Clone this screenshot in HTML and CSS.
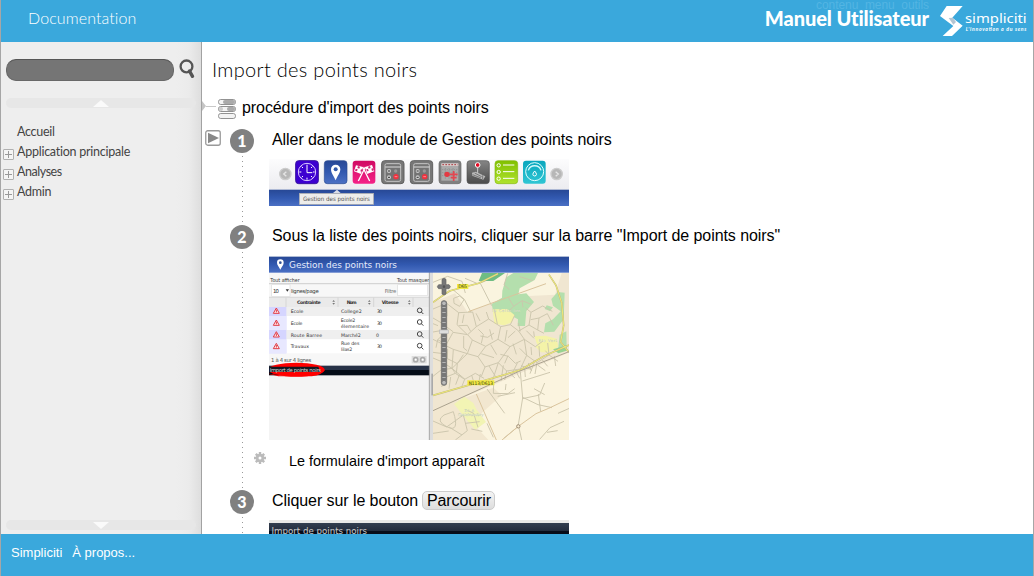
FILE: index.html
```html
<!DOCTYPE html>
<html lang="fr">
<head>
<meta charset="utf-8">
<title>Import des points noirs</title>
<link rel="stylesheet" href="styles.css">
</head>
<body>
<header class="header">
  <div class="doc-title">Documentation</div>
  <div class="skip">contenu&nbsp; menu&nbsp; outils</div>
  <div class="manual">Manuel Utilisateur</div>
  <svg class="logo" viewBox="600 12 264 102" width="88" height="34">
    <path d="M620 18H668L637 53 668 77 636 108H608L640 78 600 48Z" fill="#fff"/>
    <path d="M626 54L638 53 648 66 640 74Z" fill="#b4c5d2"/>
    <text x="675" y="70" font-family="Noto Sans" font-size="40" textLength="185" lengthAdjust="spacingAndGlyphs" fill="#fff">simpliciti</text>
    <text x="677" y="92" font-family="Lato" font-style="italic" font-weight="bold" font-size="15" textLength="182" fill="#fff">L'innovation a du sens</text>
  </svg>
</header>
<main class="main">
  <aside class="sidebar">
    <div class="search">
      <div class="search-box"></div>
      <svg width="17" height="20" viewBox="0 0 17 20"><circle cx="7.500" cy="7.400" r="5.900" fill="none" stroke="#555" stroke-width="2.300"/><path d="M10.500 12L13.500 17.300" stroke="#555" stroke-width="3.400" stroke-linecap="round"/></svg>
    </div>
    <div class="scroll-bar"><svg width="16" height="7"><path d="M0 7L8 0 16 7Z" fill="#fafafa"/></svg></div>
    <nav class="nav">
      <div class="nav-item"><i class="blank"></i><span class="n1">Accueil</span></div>
      <div class="nav-item"><i class="plus"></i><span class="n2">Application principale</span></div>
      <div class="nav-item"><i class="plus"></i><span class="n3">Analyses</span></div>
      <div class="nav-item"><i class="plus"></i><span class="n4">Admin</span></div>
    </nav>
    <div class="scroll-bar bottom"><svg width="16" height="7"><path d="M0 0L8 7 16 0Z" fill="#fafafa"/></svg></div>
  </aside>
  <article class="content">
    <h1 class="title">Import des points noirs</h1>
    <div class="proc">
      <svg width="35" height="22" viewBox="0 0 35 22">
        <path d="M0 4L4 9 0 14Z" fill="#c4c4c4"/><path d="M4 9.500H14" stroke="#c8c8c8"/>
        <g fill="#f3f3f3" stroke="#929292"><rect x="16.500" y="2.500" width="17" height="5" rx="2.200"/><rect x="16.500" y="9.500" width="17" height="5" rx="2.200"/><rect x="16.500" y="16.500" width="17" height="5" rx="2.200"/></g>
        <rect x="21" y="3" width="12" height="4" rx="2" fill="#aaa"/><rect x="25" y="10" width="8" height="4" rx="2" fill="#aaa"/><rect x="17" y="10" width="4" height="4" rx="2" fill="#ccc"/>
      </svg>
      <span class="proc-name">procédure d'import des points noirs</span>
    </div>
    <ol class="steps">
      <li class="step s1">
        <svg class="play" width="16" height="16"><rect x=".75" y=".75" width="14.500" height="14.500" rx="2" fill="#fff" stroke="#999" stroke-width="1.300"/><path d="M3 2.800L14 8 3 13.200Z" fill="#888"/></svg>
        <b class="num">1</b>
        <div class="body">
          <p class="cmd">Aller dans le module de Gestion des points noirs</p>
          <svg class="shot" width="300" height="47" viewBox="12 12 900 141">
            <defs>
              <linearGradient id="tb" x2="0" y2="1"><stop stop-color="#fcfcfd"/><stop offset="1" stop-color="#ececf0"/></linearGradient>
              <linearGradient id="bl" x2="0" y2="1"><stop stop-color="#274895"/><stop offset=".5" stop-color="#3259b0"/><stop offset="1" stop-color="#4b70c4"/></linearGradient>
              <linearGradient id="dk" x2="0" y2="1"><stop stop-color="#858585"/><stop offset="1" stop-color="#4b4b4b"/></linearGradient>
              <linearGradient id="pk" x2="0" y2="1"><stop stop-color="#d00963"/><stop offset="1" stop-color="#f42287"/></linearGradient>
              <linearGradient id="gn" x2="0" y2="1"><stop stop-color="#80c000"/><stop offset="1" stop-color="#afe22d"/></linearGradient>
              <linearGradient id="cy" x2="0" y2="1"><stop stop-color="#08a6bd"/><stop offset="1" stop-color="#30c6d4"/></linearGradient>
              <g id="calc"><rect x="350" y="17" width="67" height="69" rx="9" fill="#777" stroke="#606060" stroke-width="3"/><rect x="360" y="26" width="47" height="53" rx="5" fill="#737373" stroke="#c5c5c5" stroke-width="3"/><path d="M361 36H407" stroke="#ddd" stroke-width="3"/><g fill="#ccc"><circle cx="372" cy="48" r="6"/><circle cx="392" cy="48" r="5" fill="#999"/><circle cx="372" cy="67" r="6"/></g><path d="M369 48H375M369 67H375" stroke="#333" stroke-width="3"/><circle cx="393" cy="65" r="8" fill="#ef3340"/><path d="M389 65H397" stroke="#fbb" stroke-width="2"/></g>
            </defs>
            <rect x="12" y="12" width="900" height="92" fill="url(#tb)"/>
            <rect x="12" y="104" width="900" height="49" fill="url(#bl)"/>
            <g fill="#b7b7b7" stroke="#ccc" stroke-width="4"><circle cx="61" cy="57" r="17"/><circle cx="875" cy="57" r="17"/></g>
            <path d="M64 50L56 57 64 64M872 50L880 57 872 64" fill="none" stroke="#e5e5e5" stroke-width="4"/>
            <rect x="92" y="17" width="68" height="69" rx="9" fill="#3d00d1" stroke="#3915a0" stroke-width="3"/>
            <circle cx="126" cy="51" r="26" fill="none" stroke="#dcccff" stroke-width="3"/><path d="M126 29V53H142M126 68V74M103 51H109M144 51H149M110 35L114 39M142 35L138 39M110 67L114 63M142 67L138 63" fill="none" stroke="#fff" stroke-width="3"/>
            <rect x="178" y="17" width="68" height="69" rx="9" fill="url(#bl)" stroke="#274a90" stroke-width="2"/>
            <path d="M212 76C206 63 198 54 198 43A14 14 0 0 1 226 43C226 54 217 63 212 76Z" fill="#fff"/><circle cx="212" cy="43" r="6" fill="#3259aa"/>
            <rect x="263" y="17" width="68" height="69" rx="9" fill="url(#pk)"/>
            <path d="M273 31L294 36 288 57 267 49ZM321 30L300 36 306 57 328 49Z" fill="#fff"/><path d="M293 36L314 78M301 36L280 78" stroke="#fff" stroke-width="4"/><path d="M279 33l6 2-2 6-6-2zM288 43l5 1-2 6-5-1zM272 41l6 2-2 6-6-2zM315 33l-6 2 2 6 6-2zM304 43l5-1 2 6-5 1zM319 41l6-2 2 7-6 2z" fill="#cf2471"/>
            <use href="#calc"/><use href="#calc" x="86"/>
            <rect x="522" y="17" width="66" height="69" rx="9" fill="#808080" stroke="#666" stroke-width="2"/><rect x="529" y="25" width="51" height="52" fill="#aaa"/><path d="M529 29H580" stroke="#d8caca" stroke-width="8"/><path d="M532 29H578" stroke="#a83a3e" stroke-width="3" stroke-dasharray="5 4"/><path d="M531 44H578M531 53H578M531 62H578M541 39V73M552 39V73M564 39V73" stroke="#888" stroke-width="2" stroke-dasharray="4 3"/><circle cx="546" cy="58" r="8" fill="#e43943"/><path d="M566 48V78M552 58H578M557 68H575" stroke="#e34750" stroke-width="5"/>
            <rect x="606" y="17" width="67" height="69" rx="9" fill="url(#dk)" stroke="#555" stroke-width="2"/><path d="M638 37V54" stroke="#fff" stroke-width="2"/><circle cx="638" cy="30" r="7" fill="#e60a24" stroke="#fff" stroke-width="3"/><path d="M621 53L632 50 661 64 655 74 622 62Z" fill="#bbb"/><path d="M623 59L648 69M629 54L650 65M653 61V72" stroke="#777" stroke-width="3"/>
            <rect x="690" y="17" width="68" height="69" rx="9" fill="url(#gn)" stroke="#85b914" stroke-width="2"/><path d="M714 30H748M714 50H748M714 70H748" stroke="#fff" stroke-width="3"/><g fill="none" stroke="#fff" stroke-width="3"><circle cx="701" cy="31" r="5"/><circle cx="701" cy="51" r="5"/><circle cx="701" cy="71" r="5"/></g>
            <rect x="774" y="17" width="68" height="69" rx="9" fill="url(#cy)"/><circle cx="809" cy="50" r="27" fill="none" stroke="#e2ffff" stroke-width="3"/><path d="M790 46A20 20 0 0 1 828 46" fill="none" stroke="#d4f8fb" stroke-width="4"/><path d="M809 48Q798 61 809 63 820 61 809 48Z" fill="none" stroke="#fff" stroke-width="3"/>
            <path d="M204 114L216 104 227 114Z" fill="#dadee8"/>
            <rect x="103" y="115" width="223" height="33" fill="#ededeb" stroke="#aaa" stroke-width="2"/>
            <text x="114" y="138" class="ui" font-size="18" textLength="201" lengthAdjust="spacingAndGlyphs" fill="#555">Gestion des points noirs</text>
          </svg>
        </div>
      </li>
      <li class="step s2">
        <b class="num">2</b>
        <div class="body">
          <p class="cmd">Sous la liste des points noirs, cliquer sur la barre "Import de points noirs"</p>
          <svg class="shot" width="300" height="184" viewBox="12 12 900 552">
            <rect x="12" y="12" width="900" height="552" fill="#f7f7f7"/>
            <rect x="12" y="372" width="480" height="192" fill="#f4f4f4"/>
            <g class="ui" font-size="16" fill="#333">
              <text x="16" y="91" textLength="88" lengthAdjust="spacingAndGlyphs">Tout afficher</text><text x="396" y="91" textLength="97" lengthAdjust="spacingAndGlyphs">Tout masquer</text>
              <path d="M12 95H493M12 136H493" stroke="#bbb" stroke-width="2"/>
              <rect x="20" y="98" width="55" height="35" fill="#fff" stroke="#ddd" stroke-width="2"/><rect x="398" y="98" width="89" height="33" fill="#fff" stroke="#ddd" stroke-width="2"/>
              <text x="24" y="122" textLength="18">10</text><path d="M62 112H72L67 119Z"/><text x="78" y="122" textLength="83">lignes/page</text><text x="359" y="122" textLength="35" fill="#777">Filtre</text>
              <rect x="12" y="137" width="481" height="28" fill="#eaeaea"/><path d="M63 137V165M219 137V165M326 137V165M444 137V165" stroke="#ccc" stroke-width="2"/>
              <g font-weight="bold" font-size="14"><text x="96" y="156" textLength="71">Contrainte</text><text x="245" y="156" textLength="30">Nom</text><text x="350" y="156" textLength="51">Vitesse</text></g>
              <path d="M202 149l4-5 4 5zM202 153l4 5 4-5zM309 149l4-5 4 5zM309 153l4 5 4-5zM429 149l4-5 4 5zM429 153l4 5 4-5z" fill="#777"/>
              <rect x="12" y="165" width="481" height="27" fill="#efefef"/><rect x="12" y="192" width="481" height="42" fill="#fff"/><rect x="12" y="234" width="481" height="28" fill="#efefef"/><rect x="12" y="262" width="481" height="42" fill="#fff"/><path d="M12 165H64V304H12Z" fill="#d5d5ff"/><path d="M12 192H64V234H12ZM12 262H64V304H12Z" fill="#e8e8ff"/>
              <g fill="#fff2f2" stroke="#e13b46" stroke-width="3" stroke-linejoin="round"><path id="warn" d="M34 168L43 184H25Z"/><use href="#warn" y="36"/><use href="#warn" y="71"/><use href="#warn" y="106"/><path d="M34 173V181M34 209V217M34 244V252M34 279V287"/></g>
              <g font-size="14"><text x="77" y="183" textLength="38">Ecole</text><text x="228" y="183" textLength="62">College2</text><text x="336" y="183" textLength="15">30</text><text x="77" y="219" textLength="35">Ecole</text><text x="227" y="209" textLength="44">Ecole2</text><text x="228" y="227" textLength="84">élementaire</text><text x="336" y="219" textLength="15">30</text><text x="77" y="254" textLength="94">Route Barree</text><text x="228" y="254" textLength="59">Marché2</text><text x="333" y="254">0</text><text x="77" y="289" textLength="55">Travaux</text><text x="228" y="280" textLength="55">Rue des</text><text x="228" y="298" textLength="34">lilas2</text><text x="336" y="289" textLength="15">30</text></g>
              <g fill="none" stroke="#444" stroke-width="3"><g id="glass"><circle cx="464" cy="175" r="7"/><path d="M469 180L475 186"/></g><use href="#glass" y="35"/><use href="#glass" y="71"/><use href="#glass" y="106"/></g>
              <text x="18" y="330" textLength="121" fill="#555">1 à 4 sur 4 lignes</text>
              <rect x="440" y="312" width="45" height="22" fill="#ddd"/><g fill="#fff" stroke="#aaa" stroke-width="5"><circle cx="452" cy="323" r="6"/><circle cx="473" cy="323" r="6"/></g>
            </g>
            <rect x="12" y="341" width="487" height="15" fill="#273247"/><rect x="12" y="354" width="487" height="16" fill="#050d17"/>
            <ellipse cx="94" cy="353" rx="85" ry="21" fill="#f00"/><path d="M12 341V365Q100 380 171 355L180 353Q172 369 140 373H40L12 366Z" fill="#f00"/><path d="M12 344H160L166 360H12Z" fill="#141821"/><text x="14" y="359" class="ui" font-size="16" textLength="154" fill="#ddd">Import de points noirs</text>
            <path d="M493 60H504V564H493Z" fill="#ddd"/><path d="M493 60V564" stroke="#888" stroke-width="2"/><rect x="499" y="365" width="7" height="65" fill="#aaa"/>
            <svg x="504" y="63" width="408" height="501" viewBox="24 63 408 501">
              <rect x="24" y="63" width="408" height="501" fill="#f0e6d1"/>
              <path d="M24 63H410L390 128 248 135 128 181 90 124 24 151Z" fill="#faf4df"/>
              <path d="M24 476L433 301V564H24Z" fill="#fbf4df"/>
              <path d="M24 470L205 407 230 430 140 510 190 564H24Z" fill="#f2e7d0"/>
              <path d="M171 63H240L205 87 161 87Z" fill="#6fbd83"/>
              <path d="M244 76L265 63H339L329 84 284 109 280 127 304 124 327 150 304 177 300 222 278 222 279 202 241 182 203 171 200 156 231 137 232 116ZM398 120L419 122 416 202 388 239 357 241 361 214 384 202 407 178 384 161 379 141ZM365 160L384 166 375 177 359 171ZM404 248L424 238 425 282 399 294Z" fill="#b4dfad"/>
              <path d="M203 172L247 171 269 190 261 211 238 220 208 215ZM328 253L361 251 395 260 400 284 366 302 343 297ZM330 283L360 279 367 299 348 301Z" fill="#f4f3a8"/>
              <path d="M87 456L118 434 145 453 154 472 183 510 151 533 128 507Z" fill="#f2f4b4"/>
              <path d="M384 292L425 280V296L400 304Z" fill="#98d491"/>
              <g fill="none" stroke="#cbc5ac" stroke-width="2.800">
                <path d="M24 91L68 73 111 88 121 123M62 126L84 113 118 142 138 181M87 154L104 163 117 143 104 132 86 139ZM24 171L65 154 101 182 143 180 154 224 128 248 84 241 62 281 24 262M65 154L66 192 48 212 24 198M48 212L84 239M101 182L96 218 126 247M154 224L191 201 227 224 256 218 269 190M191 201L184 180M227 224L219 262 182 283 142 264 128 248M142 264L127 305 85 292 62 281 50 329 81 349 127 305M85 292L81 349M50 329L24 318M81 349L120 382M127 305L159 314 182 283M219 262L255 284 298 262 331 284 354 267M159 314L180 345 220 332 255 284M220 332L245 357 286 351 305 310 298 262M180 345L169 373M245 357L239 384M305 310L336 332 372 309 368 273M305 310L284 289M372 309L399 328M336 332L330 366M256 218L281 237 298 262M281 237L312 219 338 234 357 244M312 219L318 181 353 162 382 178M318 181L302 168M338 234L342 198 367 185M342 198L317 203M367 185L385 220M372 309L361 296M24 373L48 354 81 349M50 405L61 376 91 364 119 382 111 402M91 364L81 349M119 382L151 364 177 379M203 384L220 332M260 368L277 333M120 79L158 95 182 87M200 161L166 94M248 64L237 99 253 112M284 74L323 86M250 137L266 163 291 146 319 157M266 163L251 178M291 146L294 166"/>
                <path d="M24 215L39 221M24 240L69 232M33 287L38 263 58 245M38 263L65 278M24 301L54 305M67 320L97 335 94 364M67 320L68 291M97 335L115 308M116 252L116 288 126 296M137 238L127 220 101 221M117 187L112 213M160 232L175 247 169 274M165 207L153 184M208 172L217 216M194 232L202 263M166 252L188 256M188 256L207 243M169 305L207 317M197 278L215 308M240 269L246 234M226 307L250 313 271 334 287 327M239 334L249 311M264 275L274 307M271 237L249 257M286 238L280 213M304 236L327 259M326 238L328 255M318 285L320 309M342 282L344 314M288 341L318 352M310 333L320 357M339 340L361 356M352 324L368 343M388 312L392 342M77 375L72 410M103 369L92 398M140 370L149 398M166 366L161 395M192 342L211 373M235 340L228 387M250 360L270 378M272 356L284 379M299 349L301 375M315 365L327 333"/>
                <path d="M186 411L239 484M206 395L205 424 249 425 269 410M218 433L270 422M241 414L243 396M286 359L293 438 280 518 290 564M292 387L375 361M292 440L344 429 359 393M340 426L347 479M327 410L359 428M291 435L339 458 381 467M280 523L236 559M344 562L375 527 417 508M366 541L398 536M399 484L433 469M24 507L65 525 115 489 127 536 91 564M57 489Q29 507 67 525T85 479ZM72 525L111 549M121 514L164 509M24 544L71 537M127 475L146 484 159 526M186 514L205 556M139 531L172 538"/>
              </g>
              <g fill="none" stroke="#c0b582" stroke-width="5"><path d="M24 151L73 117 161 94 219 65M372 68L393 100 410 152 416 220 407 270 432 301M24 430L139 397 286 354 356 313 432 279"/></g><g fill="none" stroke="#edea75" stroke-width="3"><path d="M24 151L73 117 161 94 219 65M372 68L393 100 410 152 416 220 407 270 432 301M24 430L139 397 286 354 356 313 432 279"/></g>
              <path d="M24 476L280 359 432 299" fill="none" stroke="#aaa28f" stroke-width="3"/><path d="M130 179L237 140 363 95M154 426L214 564M231 564L280 523 333 485 371 469 432 440" fill="none" stroke="#dac49d" stroke-width="3"/>
              <circle cx="280" cy="523" r="5" fill="#f9edd2" stroke="#9f8d75" stroke-width="3"/>
              <path d="M96 96H130V111H96ZM127 385H208V400H127Z" fill="#f2e943"/><g class="ui" font-size="14" fill="#3d4518"><text x="100" y="109" textLength="26">D65</text><text x="131" y="398" textLength="73" lengthAdjust="spacingAndGlyphs">N113/D613</text></g>
              <g class="ui" font-size="11" fill="#fff" stroke="#b5c29d" stroke-width=".6"><text x="202" y="180" textLength="83">la Celle-les</text><text x="341" y="269" textLength="55">Rio Vert</text><text x="118" y="481">Z.I. A</text><text x="99" y="493" textLength="76">Castelnaudary</text></g>
              <g fill="#777" stroke="#666" stroke-width="2"><path d="M51 82Q57 76 63 82V98H72Q80 104 72 110H63V126Q57 132 51 126V110H41Q33 104 41 98H51Z"/><rect x="49" y="146" width="16" height="254" rx="7"/></g><path d="M57 165V389" stroke="#b5b5b5" stroke-width="10" stroke-dasharray="3 12"/><rect x="43" y="234" width="27" height="10" fill="#ddd" stroke="#bbb" stroke-width="2"/><circle cx="57" cy="154" r="7" fill="#bbb" stroke="#777" stroke-width="3"/><circle cx="57" cy="392" r="7" fill="#bbb" stroke="#777" stroke-width="3"/><circle cx="57" cy="104" r="4" fill="#555"/>
            </svg>
            <rect x="12" y="14" width="900" height="48" fill="url(#bl)"/><path d="M12 13H912" stroke="#aab9d8" stroke-width="2"/>
            <path d="M46 53C42 44 36 39 36 32A10 10 0 0 1 56 32C56 39 50 44 46 53Z" fill="#fff"/><circle cx="46" cy="32" r="4" fill="#315196"/><text x="72" y="48" class="ui" font-size="27" textLength="324" lengthAdjust="spacingAndGlyphs" fill="#e7edfc">Gestion des points noirs</text>
          </svg>
          <div class="result"><svg width="12" height="12" viewBox="-6 -6 12 12"><g stroke="#bbb" stroke-width="2.400"><path d="M0-6V6M-6 0H6M-4.200-4.200L4.200 4.200M4.200-4.200L-4.200 4.200"/></g><circle r="4.200" fill="#bbb"/><circle r="1.500" fill="#fff"/></svg><span class="result-text">Le formulaire d'import apparaît</span></div>
        </div>
      </li>
      <li class="step s3">
        <b class="num">3</b>
        <div class="body">
          <p class="cmd">Cliquer sur le bouton <kbd>Parcourir</kbd></p>
          <svg class="shot" width="300" height="30" viewBox="0 0 300 30"><defs><linearGradient id="nv" x2="0" y2="1"><stop stop-color="#333f50"/><stop offset="1" stop-color="#222c3d"/></linearGradient></defs><rect width="300" height="30" fill="#070c19"/><rect width="300" height="3" fill="#e9e9e7"/><rect y="3" width="300" height="8" fill="url(#nv)"/><text x="2.500" y="14" class="ui" font-size="9" textLength="95.500" lengthAdjust="spacingAndGlyphs" fill="#ccc">Import de points noirs</text></svg>
        </div>
      </li>
    </ol>
  </article>
</main>
<footer class="footer"><span class="f1">Simpliciti</span><span class="f2">À propos...</span></footer>
</body>
</html>
```
FILE: styles.css
```css
* { box-sizing: border-box; }
body { margin: 0; width: 1034px; height: 576px; overflow: hidden; display: flex; flex-direction: column; border-left: 1px solid #a6a6a6; border-right: 1px solid #a6a6a6; background: #fff; font-family: "Liberation Sans", Arial, sans-serif; color: #000; }
.header { position: relative; height: 42px; flex: none; display: flex; align-items: flex-start; background: #3aa8dc; color: #fff; padding: 0 5px 0 27px; }
.doc-title { font: 300 16px/20px Lato, sans-serif; letter-spacing: .1px; margin-top: 8px; white-space: nowrap; }
.skip { position: absolute; right: 104px; top: -2px; font-size: 12px; line-height: 14px; color: #53b5e3; letter-spacing: -.05px; white-space: nowrap; }
.manual { position: relative; margin-left: auto; margin-top: 6px; font: 900 20px/24px Lato, sans-serif; letter-spacing: -.1px; white-space: nowrap; }
.logo { flex: none; margin: 4px 0 0 11px; }
.main { flex: 1; min-height: 0; display: flex; }
.sidebar { width: 201px; flex: none; display: flex; flex-direction: column; border-right: 1px solid #a2a2a2; background: linear-gradient(to right, #eee 175px, #ebebeb 188px, #dedede 200px); padding: 17px 5px 3px 5px; }
.search { display: flex; gap: 5px; height: 39px; }
.search-box { width: 168px; flex: none; height: 22px; border-radius: 10px; background: #757575; border: 1px solid #686868; border-top-color: #555; }
.scroll-bar { height: 10px; border-radius: 5px; background: #e7e7e7; display: flex; justify-content: center; align-items: center; flex: none; }
.bottom { margin-top: auto; margin-bottom: 1px; }
.nav { margin-top: 14px; }
.nav-item { height: 20px; display: flex; gap: 3px; margin-left: -3px; align-items: center; font: 12.5px/20px Lato, sans-serif; color: #444; white-space: nowrap; }
.plus, .blank { width: 11px; height: 11px; flex: none; margin-top: 4px; }
.plus { border: 1px solid #b0b0b0; border-radius: 1px; background: linear-gradient(#999, #999) center / 7px 1px no-repeat, linear-gradient(#999, #999) center / 1px 7px no-repeat, #f5f5f5; }
.n1 { letter-spacing: -.3px; }
.n2 { letter-spacing: -.25px; }
.n3 { letter-spacing: -.45px; }
.n4 { letter-spacing: -.3px; }
.content { flex: 1; min-width: 0; overflow: hidden; }
.title { margin: 14px 0 0 10px; height: 41px; font: 300 20px/26px Lato, sans-serif; letter-spacing: .3px; white-space: nowrap; }
.proc { display: flex; height: 32px; gap: 5px; }
.proc-name { font-size: 16px; line-height: 22px; letter-spacing: -.08px; white-space: nowrap; }
.steps { margin: 0; padding: 0 0 0 3px; list-style: none; }
.step { display: flex; align-items: flex-start; background: radial-gradient(circle, #999 .7px, transparent 1px) 35px 0 / 5px 5px repeat-y; }
.s1 { height: 96px; }
.s2 { height: 265px; }
.s3 { height: 80px; }
.play { flex: none; margin-top: 1px; }
.s2, .s3 { padding-left: 16px; }
.num { width: 24px; height: 24px; flex: none; margin-left: 9px; border-radius: 50%; background: #808080; color: #fff; font: 900 16px/24px Lato, sans-serif; text-align: center; }
.body { padding-left: 15px; }
.cmd { margin: 0; padding-left: 3px; height: 31px; font-size: 16px; line-height: 21px; letter-spacing: -.075px; white-space: nowrap; }
.s1 .cmd, .s3 .cmd { height: 30px; }
.shot { display: block; }
.ui { font-family: "DejaVu Sans", sans-serif; }
.result { margin-left: -15px; margin-top: 10px; display: flex; gap: 23px; align-items: center; height: 22px; }
.result svg { margin-top: -6px; }
.result-text { font-size: 14.4px; }
kbd { display: inline-block; height: 19px; border: 1px solid #ccc; border-radius: 5px; padding: 0 3.5px; background: linear-gradient(#f4f4f4, #ddd); font: 16px/17px "Liberation Sans", sans-serif; letter-spacing: -.1px; }
.footer { height: 42px; flex: none; background: #3aa8dc; color: #fff; display: flex; gap: 10px; padding: 10px; font-size: 13px; line-height: 17px; }
```
